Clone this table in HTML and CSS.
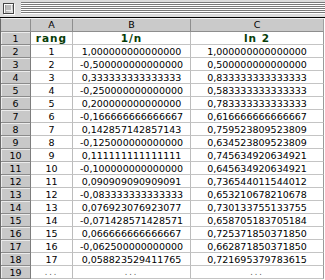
FILE: index.html
```html
<!DOCTYPE html>
<html>
<head>
<meta charset="utf-8">
<link rel="stylesheet" href="styles.css">
</head>
<body>
<div class="win">
  <div class="titlebar">
    <div class="closebox"><span class="inner"></span></div>
    <div class="stripes"></div>
  </div>
  <div class="sheet">
    <div class="corner"></div><div class="colhead">A</div><div class="colhead">B</div><div class="colhead last">C</div>
    <div class="rowhead">1</div><div class="cell title">rang</div><div class="cell title">1/n</div><div class="cell title last">ln 2</div>
    <div class="rowhead">2</div><div class="cell">1</div><div class="cell">1,000000000000000</div><div class="cell last">1,000000000000000</div>
    <div class="rowhead">3</div><div class="cell">2</div><div class="cell">-0,500000000000000</div><div class="cell last">0,500000000000000</div>
    <div class="rowhead">4</div><div class="cell">3</div><div class="cell">0,333333333333333</div><div class="cell last">0,833333333333333</div>
    <div class="rowhead">5</div><div class="cell">4</div><div class="cell">-0,250000000000000</div><div class="cell last">0,583333333333333</div>
    <div class="rowhead">6</div><div class="cell">5</div><div class="cell">0,200000000000000</div><div class="cell last">0,783333333333333</div>
    <div class="rowhead">7</div><div class="cell">6</div><div class="cell">-0,166666666666667</div><div class="cell last">0,616666666666667</div>
    <div class="rowhead">8</div><div class="cell">7</div><div class="cell">0,142857142857143</div><div class="cell last">0,759523809523809</div>
    <div class="rowhead">9</div><div class="cell">8</div><div class="cell">-0,125000000000000</div><div class="cell last">0,634523809523809</div>
    <div class="rowhead">10</div><div class="cell">9</div><div class="cell">0,111111111111111</div><div class="cell last">0,745634920634921</div>
    <div class="rowhead">11</div><div class="cell">10</div><div class="cell">-0,100000000000000</div><div class="cell last">0,645634920634921</div>
    <div class="rowhead">12</div><div class="cell">11</div><div class="cell">0,090909090909091</div><div class="cell last">0,736544011544012</div>
    <div class="rowhead">13</div><div class="cell">12</div><div class="cell">-0,083333333333333</div><div class="cell last">0,653210678210678</div>
    <div class="rowhead">14</div><div class="cell">13</div><div class="cell">0,076923076923077</div><div class="cell last">0,730133755133755</div>
    <div class="rowhead">15</div><div class="cell">14</div><div class="cell">-0,071428571428571</div><div class="cell last">0,658705183705184</div>
    <div class="rowhead">16</div><div class="cell">15</div><div class="cell">0,066666666666667</div><div class="cell last">0,725371850371850</div>
    <div class="rowhead">17</div><div class="cell">16</div><div class="cell">-0,062500000000000</div><div class="cell last">0,662871850371850</div>
    <div class="rowhead">18</div><div class="cell">17</div><div class="cell">0,058823529411765</div><div class="cell last">0,721695379783615</div>
    <div class="rowhead">19</div><div class="cell dots">...</div><div class="cell dots">...</div><div class="cell dots last">...</div>
  </div>
</div>
</body>
</html>
```
FILE: styles.css
```css
html, body {
  margin: 0;
  padding: 0;
  background: #ffffff;
  overflow: hidden;
}
.win {
  width: 325px;
  height: 280px;
  font-family: "DejaVu Sans", Verdana, sans-serif;
  font-size: 9.5px;
  color: #000;
}
.titlebar {
  height: 17px;
  background: #dcdcdc;
  border-bottom: 1px solid #000;
  display: flex;
  align-items: center;
  padding-left: 3px;
  box-sizing: content-box;
}
.closebox {
  width: 9px;
  height: 9px;
  border: 1px solid #444;
  background: linear-gradient(135deg, #8a8a8a 0%, #b0b0b0 50%, #f0f0f0 100%);
  box-shadow: 1px 1px 0 #fff, inset 1px 1px 0 #fff;
  display: flex;
  align-items: center;
  justify-content: center;
  margin-top: -1px;
}
.closebox .inner {
  width: 5px;
  height: 5px;
  background: #bbb;
  border-right: 1px solid #eee;
  border-bottom: 1px solid #eee;
}
.stripes {
  flex: 1;
  height: 12px;
  margin-left: 7px;
  margin-top: -1px;
  background: repeating-linear-gradient(to bottom, #7a7a7a 0 1px, #ffffff 1px 2px);
}
.sheet {
  display: grid;
  grid-template-columns: 30px 42px 118px 133px;
  grid-auto-rows: 13px;
  border-top: 1px solid #f4f4f4;
  border-left: 1px solid #6a6a6a;
  width: 324px;
}
.sheet > div {
  box-sizing: border-box;
  display: flex;
  align-items: center;
  justify-content: center;
  line-height: 1;
  white-space: nowrap;
  overflow: hidden;
}
.corner, .colhead {
  background: #cacaca;
  border-right: 1px solid #8e8e8e;
  border-bottom: 1px solid #8e8e8e;
}
.colhead.last {
  border-right: 1px solid #a0a0a0;
}
.rowhead {
  background: #c8c8c8;
  border-right: 1px solid #7d7d7d;
  border-bottom: 1px solid #8a8a8a;
  box-shadow: inset 1px 1px 0 #ececec;
  padding-top: 1px;
}
.cell {
  border-right: 1px solid #bcbcbc;
  border-bottom: 1px solid #c4c4c4;
  padding-top: 1px;
}
.cell.last {
  border-right: 1px solid #9a9a9a;
}
.title {
  font-weight: bold;
  color: #073d07;
  letter-spacing: 1px;
  font-size: 10.5px;
}
.dots {
  color: #555;
  letter-spacing: 2px;
  font-size: 8px;
}
```
